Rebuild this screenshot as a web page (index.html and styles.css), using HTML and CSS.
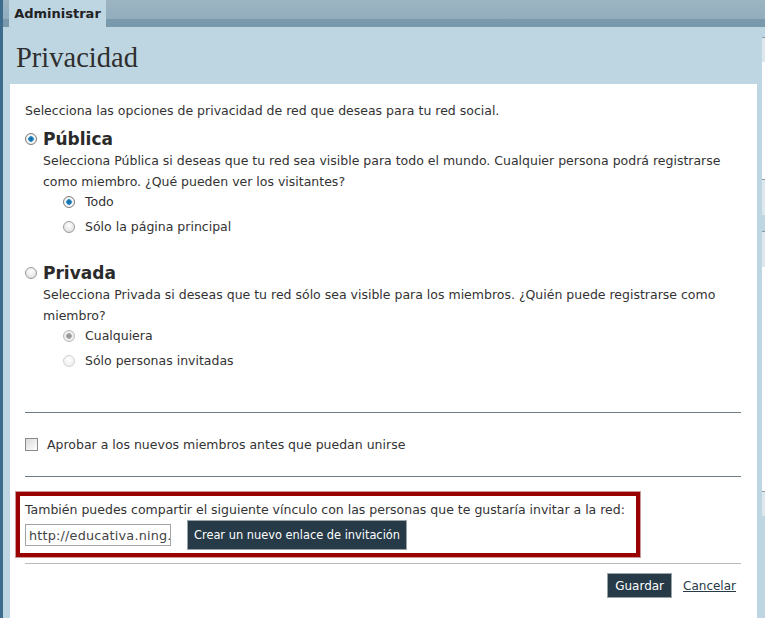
FILE: index.html
```html
<!DOCTYPE html>
<html lang="es">
<head>
  <meta charset="UTF-8">
  <title>Privacidad</title>
  <link rel="stylesheet" href="styles.css">
</head>
<body>
  <div class="page">
    <div class="edge"></div>
    <div class="main">
      <div class="topbar">
        <div class="tab">Administrar</div>
      </div>
      <div class="workspace">
        <div class="panel">
          <h1>Privacidad</h1>
          <div class="content">
            <p class="intro">Selecciona las opciones de privacidad de red que deseas para tu red social.</p>

            <div class="option">
              <div class="option-head"><span class="radio on"></span><span class="option-title">Pública</span></div>
              <p class="option-desc">Selecciona Pública si deseas que tu red sea visible para todo el mundo. Cualquier persona podrá registrarse como miembro. ¿Qué pueden ver los visitantes?</p>
              <div class="sub"><span class="radio on"></span>Todo</div>
              <div class="sub"><span class="radio"></span>Sólo la página principal</div>
            </div>

            <div class="option private">
              <div class="option-head"><span class="radio"></span><span class="option-title">Privada</span></div>
              <p class="option-desc">Selecciona Privada si deseas que tu red sólo sea visible para los miembros. ¿Quién puede registrarse como miembro?</p>
              <div class="sub disabled"><span class="radio dim-on"></span>Cualquiera</div>
              <div class="sub disabled"><span class="radio dim"></span>Sólo personas invitadas</div>
            </div>

            <hr class="rule">
            <div class="approve"><span class="check"></span>Aprobar a los nuevos miembros antes que puedan unirse</div>
            <hr class="rule">

            <div class="invite">
              <p>También puedes compartir el siguiente vínculo con las personas que te gustaría invitar a la red:</p>
              <div class="invite-row">
                <div class="link-field">http://educativa.ning.</div>
                <button class="dark-btn create">Crear un nuevo enlace de invitación</button>
              </div>
            </div>
            <hr class="rule light">

            <div class="actions">
              <button class="dark-btn save">Guardar</button>
              <a href="#" class="cancel">Cancelar</a>
            </div>
          </div>
        </div>
        <div class="peek">
          <div class="peek-box"></div>
          <div class="peek-gap"></div>
          <div class="peek-box tall"></div>
          <div class="peek-sep"></div>
          <div class="peek-box tall"></div>
          <div class="peek-white"></div>
          <div class="peek-box"></div>
        </div>
      </div>
    </div>
  </div>
</body>
</html>
```

FILE: styles.css
```css
body {
  margin: 0;
  background-color: #bed5e2;
  font-family: 'DejaVu Sans', Verdana, sans-serif;
  font-size: 12.5px;
  color: #333;
}

.page {
  display: flex;
  height: 618px;
  overflow: hidden;
}

.edge {
  width: 3px;
  background-color: #3e6c8c;
}

.main {
  flex: 1;
}

.topbar {
  height: 27px;
  background: linear-gradient(#9db5c3, #92adbd 70%, #7a99ac 72%, #7898ab);
  padding-left: 6px;
}

.tab {
  display: inline-block;
  width: 97px;
  height: 27px;
  line-height: 28px;
  background-color: #bed5e2;
  font-weight: bold;
  font-size: 13px;
  text-align: center;
  color: #222;
}

.workspace {
  display: flex;
  padding-left: 7px;
}

.panel {
  width: 747px;
}

h1 {
  margin: 0;
  height: 57px;
  padding-left: 6px;
  font-family: 'Liberation Serif', 'Times New Roman', serif;
  font-weight: normal;
  font-size: 28.5px;
  line-height: 62px;
  color: #2e2e2e;
}

.content {
  background-color: #fff;
  height: 534px;
  padding: 16px 16px 0 15px;
}

p {
  margin: 0;
}

.intro {
  line-height: 21px;
  margin-bottom: 7px;
}

.option-head {
  display: flex;
  align-items: center;
  height: 22px;
}

.option-title {
  font-weight: bold;
  font-size: 17px;
  color: #2a2a2a;
}

.option-head .radio {
  margin-right: 6px;
}

.option-desc {
  padding-left: 18px;
  line-height: 21px;
  margin-bottom: -3px;
}

.sub {
  display: flex;
  align-items: center;
  height: 25px;
  padding-left: 38px;
}

.sub .radio {
  margin-right: 10px;
}

.private {
  margin-top: 23px;
}

.radio {
  display: inline-block;
  box-sizing: border-box;
  width: 12px;
  height: 12px;
  border-radius: 50%;
  border: 1px solid #9a9a9a;
  background: radial-gradient(circle at 50% 35%, #fff, #d8d8d8);
}

.radio.on {
  border-color: #7d7d7d;
  background: radial-gradient(circle, #0c5e93 0, #2a8cc8 2.5px, #d7e6ef 3px, #fff 4px, #cfcfcf 6px);
}

.radio.dim-on {
  border-color: #bbb;
  background: radial-gradient(circle, #8f8f8f 0, #a6a6a6 2.5px, #e5e5e5 3px, #f5f5f5 4px, #dadada 6px);
}

.radio.dim {
  border-color: #d2d2d2;
  background: radial-gradient(circle at 50% 35%, #fff, #e9e9e9);
}

.rule {
  border: 0;
  border-top: 1px solid #6f7b82;
  margin: 0;
}

.option.private + .rule {
  margin-top: 39px;
}

.approve {
  display: flex;
  align-items: center;
  height: 63px;
}

.check {
  display: inline-block;
  box-sizing: border-box;
  width: 13px;
  height: 13px;
  border: 1px solid #8a8a8a;
  background: linear-gradient(135deg, #d9d9d9, #fff);
  margin-right: 9px;
}

.invite {
  margin: 15px 0 0 -9px;
  width: 611px;
  border: 4px solid #990000;
  box-shadow: 0 0 0 1px #c99;
  padding: 5px 0 3px 5px;
}

.invite p {
  line-height: 18px;
  white-space: nowrap;
}

.invite-row {
  display: flex;
  align-items: center;
  gap: 16px;
  margin-top: 1px;
}

.link-field {
  box-sizing: border-box;
  width: 146px;
  height: 22px;
  border: 1px solid #a5a5a5;
  padding: 3px 0 0 3px;
  white-space: nowrap;
  overflow: hidden;
  color: #444;
  font-size: 12.8px;
  letter-spacing: 0.2px;
}

.dark-btn {
  font-family: 'DejaVu Sans', Verdana, sans-serif;
  font-size: 12px;
  background-color: #263a48;
  color: #fff;
  border: 1px solid #9aa3a8;
  border-radius: 0;
  height: 30px;
  padding: 0 6px;
}

.dark-btn.create {
  font-size: 11.4px;
}

.rule.light {
  margin-top: 6px;
  border-top-color: #bcbcbc;
}

.actions {
  display: flex;
  justify-content: flex-end;
  align-items: center;
  gap: 11px;
  margin-top: 9px;
  padding-right: 5px;
}

.dark-btn.save {
  height: 25px;
  padding: 0 7px;
}

.cancel {
  color: #263a48;
  font-size: 12px;
}

.peek {
  width: 3px;
  margin-left: 5px;
  padding-top: 10px;
}

.peek-box {
  height: 24px;
  border-top: 1px solid #8a9aa3;
  background-color: #dde7ec;
}

.peek-box.tall {
  height: 35px;
}

.peek-gap {
  height: 117px;
  background-color: #fff;
}

.peek-sep {
  height: 16px;
}

.peek-white {
  height: 224px;
  background-color: #fff;
}
```
